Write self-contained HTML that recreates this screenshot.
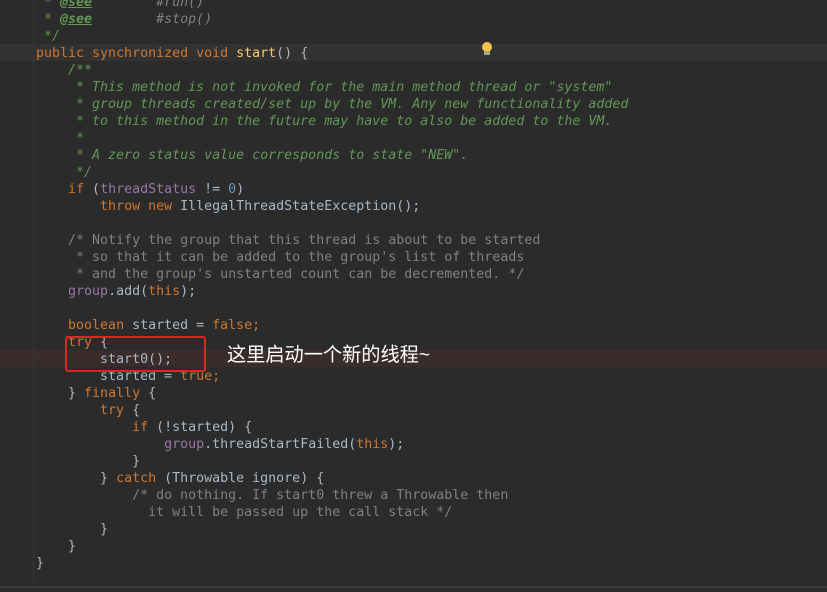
<!DOCTYPE html>
<html><head><meta charset="utf-8"><style>
body{margin:0;width:827px;height:592px;overflow:hidden;background:#2b2b2b;position:relative;font-family:"DejaVu Sans Mono","Liberation Mono",monospace;font-size:13.3px;}
.l{position:absolute;left:36px;height:17px;line-height:17px;white-space:pre;color:#a9b7c6;margin-top:1px}
.k{color:#cc7832}.c{color:#629755;font-style:italic}.g{color:#808080}.n{color:#6897bb}.m{color:#ffc66d}.f{color:#9876aa}
.see{color:#629755;font-weight:bold;text-decoration:underline;font-style:italic}
.gi{color:#808080;font-style:italic}
</style></head><body>
<div style="position:absolute;left:0;top:44px;width:827px;height:17px;background:#323232"></div>
<div style="position:absolute;left:0;top:350px;width:827px;height:17px;background:#3b2c2c"></div>
<div style="position:absolute;left:33px;top:0;width:1px;height:585px;background:#353535"></div>
<div style="position:absolute;left:0;top:586px;width:827px;height:2px;background:#3c3c3c"></div>
<div class="l" style="top:-7.5px"><span class="c"> * </span><span class="see">@see</span><span class="gi">        #run()</span></div>
<div class="l" style="top:9.5px"><span class="c"> * </span><span class="see">@see</span><span class="gi">        #stop()</span></div>
<div class="l" style="top:26.5px"><span class="c"> */</span></div>
<div class="l" style="top:43.5px"><span class="k">public synchronized void </span><span class="m">start</span>() {</div>
<div class="l" style="top:60.5px"><span class="c">    /**</span></div>
<div class="l" style="top:77.5px"><span class="c">     * This method is not invoked for the main method thread or "system"</span></div>
<div class="l" style="top:94.5px"><span class="c">     * group threads created/set up by the VM. Any new functionality added</span></div>
<div class="l" style="top:111.5px"><span class="c">     * to this method in the future may have to also be added to the VM.</span></div>
<div class="l" style="top:128.5px"><span class="c">     *</span></div>
<div class="l" style="top:145.5px"><span class="c">     * A zero status value corresponds to state "NEW".</span></div>
<div class="l" style="top:162.5px"><span class="c">     */</span></div>
<div class="l" style="top:179.5px">    <span class="k">if</span> (<span class="f">threadStatus</span> != <span class="n">0</span>)</div>
<div class="l" style="top:196.5px">        <span class="k">throw new </span>IllegalThreadStateException();</div>
<div class="l" style="top:230.5px"><span class="g">    /* Notify the group that this thread is about to be started</span></div>
<div class="l" style="top:247.5px"><span class="g">     * so that it can be added to the group's list of threads</span></div>
<div class="l" style="top:264.5px"><span class="g">     * and the group's unstarted count can be decremented. */</span></div>
<div class="l" style="top:281.5px">    <span class="f">group</span>.add(<span class="k">this</span>);</div>
<div class="l" style="top:315.5px">    <span class="k">boolean </span>started = <span class="k">false;</span></div>
<div class="l" style="top:332.5px">    <span class="k">try</span> {</div>
<div class="l" style="top:349.5px">        start0();</div>
<div class="l" style="top:366.5px">        started = <span class="k">true;</span></div>
<div class="l" style="top:383.5px">    } <span class="k">finally</span> {</div>
<div class="l" style="top:400.5px">        <span class="k">try</span> {</div>
<div class="l" style="top:417.5px">            <span class="k">if</span> (!started) {</div>
<div class="l" style="top:434.5px">                <span class="f">group</span>.threadStartFailed(<span class="k">this</span>);</div>
<div class="l" style="top:451.5px">            }</div>
<div class="l" style="top:468.5px">        } <span class="k">catch</span> (Throwable ignore) {</div>
<div class="l" style="top:485.5px"><span class="g">            /* do nothing. If start0 threw a Throwable then</span></div>
<div class="l" style="top:502.5px"><span class="g">              it will be passed up the call stack */</span></div>
<div class="l" style="top:519.5px">        }</div>
<div class="l" style="top:536.5px">    }</div>
<div class="l" style="top:553.5px">}</div>
<div style="position:absolute;left:65px;top:336px;width:137px;height:32px;border:2.5px solid #e0241f;border-radius:3px"></div>
<div style="position:absolute;left:227px;top:343px;color:#fff;font-family:'Liberation Sans','Noto Sans CJK SC',sans-serif;font-size:19.2px;line-height:26px;white-space:nowrap">这里启动一个新的线程~</div>
<div style="position:absolute;left:482px;top:42px;width:10px;height:10px;border-radius:50%;background:#f3c34a"></div>
<div style="position:absolute;left:484px;top:51px;width:6px;height:4px;background:#b0a58a"></div>
</body></html>
